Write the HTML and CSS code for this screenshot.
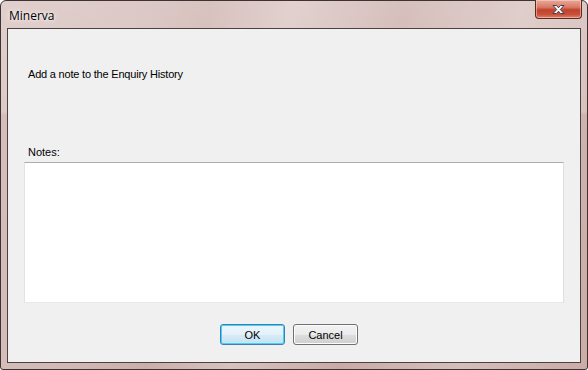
FILE: index.html
```html
<!DOCTYPE html>
<html lang="en">
<head>
   <meta charset="UTF-8">
   <meta name="viewport" content="width=device-width, initial-scale=1.0">
   <title>Minerva</title>
   <link rel="stylesheet" href="styles.css">
</head>
<body>
   <!-- Window frame -->
   <div class="window">
       <!-- Title bar with close button -->
       <div class="titlebar">
           <span class="title">Minerva</span>
           <button class="close" aria-label="Close">
               <svg width="15" height="11" viewBox="0 0 15 11">
                   <path d="M2 1.5 L5.5 1.5 L7.5 3.8 L9.5 1.5 L13 1.5 L9.3 5.5 L13 9.5 L9.5 9.5 L7.5 7.2 L5.5 9.5 L2 9.5 L5.7 5.5 Z" fill="#fff" stroke="#3c4150" stroke-width="1" stroke-linejoin="round"/>
               </svg>
           </button>
       </div>
       <!-- Client area of the dialog -->
       <div class="client">
           <p class="intro">Add a note to the Enquiry History</p>
           <label class="notes-label" for="notes">Notes:</label>
           <textarea id="notes" class="notes"></textarea>
           <div class="buttons">
               <button class="btn default">OK</button>
               <button class="btn">Cancel</button>
           </div>
       </div>
   </div>
</body>
</html>
```

FILE: styles.css
```css
/* page reset */
body {
    margin: 0;
    background-color: #ffffff;
    font-family: 'Liberation Sans', Arial, sans-serif;
}

/* outer window with the pink glass frame */
.window {
    width: 588px;
    height: 370px;
    box-sizing: border-box;
    border: 1px solid #3e3332;
    border-radius: 6px 6px 3px 3px;
    padding: 0 6px 6px;
    background:
        linear-gradient(to bottom, rgba(255, 255, 255, 0.25) 0%, rgba(255, 255, 255, 0.2) 30%, rgba(255, 255, 255, 0) 31%),
        linear-gradient(100deg, #d6bfbb 0%, #d2b9b5 20%, #cbaea9 32%, #d8c2be 45%, #c9aba6 62%, #d5beba 80%, #cbaca7 100%);
    display: flex;
    flex-direction: column;
}

/* title bar */
.titlebar {
    height: 27px;
    display: flex;
    align-items: flex-start;
    justify-content: space-between;
}

.title {
    font-family: 'Open Sans', 'Noto Sans', sans-serif;
    font-size: 12px;
    color: #000;
    margin-top: 6px;
    margin-left: 2px;
    text-shadow: 0 0 6px rgba(255, 255, 255, 0.9), 0 0 3px rgba(255, 255, 255, 0.9);
}

/* red close button */
.close {
    width: 47px;
    height: 19px;
    margin-top: -1px;
    margin-right: -1px;
    padding: 0;
    border: 1px solid #5a2a22;
    border-top: none;
    border-radius: 0 0 4px 4px;
    background: linear-gradient(to bottom, #e9a99a 0%, #d87a66 40%, #c2422c 55%, #c94f38 80%, #d9836e 100%);
    box-shadow: inset 0 0 0 1px rgba(255, 220, 210, 0.5);
    display: flex;
    align-items: center;
    justify-content: center;
}

/* client area */
.client {
    flex: 1;
    border: 1px solid #4a4241;
    background-color: #f0f0f0;
    display: flex;
    flex-direction: column;
    font-size: 11px;
    color: #000;
}

.intro {
    margin: 39px 0 0 20px;
    line-height: 13px;
    letter-spacing: -0.2px;
}

.notes-label {
    margin: 65px 0 0 20px;
    line-height: 13px;
}

/* multi line text box */
.notes {
    margin: 3px 0 0 16px;
    width: 540px;
    height: 141px;
    box-sizing: border-box;
    resize: none;
    border: 1px solid;
    border-color: #abadb3 #dbdfe6 #e3e9ef #e2e3ea;
    background-color: #fff;
    padding: 2px;
}

/* button row */
.buttons {
    display: flex;
    gap: 8px;
    margin: 21px 0 0 212px;
}

.btn {
    width: 65px;
    height: 21px;
    padding: 0;
    font-family: 'Liberation Sans', Arial, sans-serif;
    font-size: 11px;
    color: #000;
    border: 1px solid #707070;
    border-radius: 3px;
    background: linear-gradient(to bottom, #f2f2f2 0%, #ebebeb 50%, #dddddd 51%, #cfcfcf 100%);
    box-shadow: inset 0 0 0 1px #fcfcfc;
}

/* default button has the blue glow */
.default {
    border-color: #3c7fb1;
    box-shadow: inset 0 0 0 1px #48d1f7;
    background: linear-gradient(to bottom, #eaf6fd 0%, #e4f1f9 50%, #d6ebf6 51%, #c6e2f2 100%);
}
```
